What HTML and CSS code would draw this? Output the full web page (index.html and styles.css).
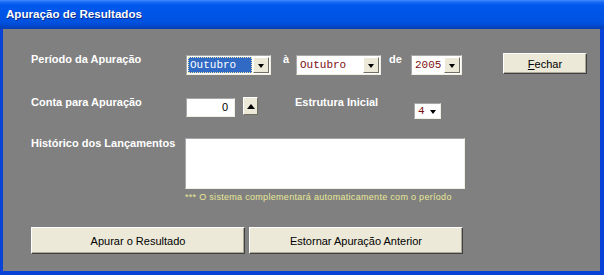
FILE: index.html
```html
<!DOCTYPE html>
<html lang="pt">
<head>
  <meta charset="UTF-8" />
  <title>Apuração de Resultados</title>
  <link rel="stylesheet" href="styles.css">
</head>
<body>
  <div class="window">
    <div class="titlebar">Apuração de Resultados</div>

    <div class="client">
      <div class="row row-periodo">
        <span class="label">Período da Apuração</span>
        <div class="combo combo-mes focused">
          <span class="value">Outubro</span>
          <span class="drop"><i class="arrow-down"></i></span>
        </div>
        <span class="joiner joiner-a">à</span>
        <div class="combo combo-mes">
          <span class="value">Outubro</span>
          <span class="drop"><i class="arrow-down"></i></span>
        </div>
        <span class="joiner joiner-de">de</span>
        <div class="combo combo-ano">
          <span class="value">2005</span>
          <span class="drop"><i class="arrow-down"></i></span>
        </div>
        <button class="btn btn-fechar"><u>F</u>echar</button>
      </div>

      <div class="row row-conta">
        <span class="label">Conta para Apuração</span>
        <div class="field field-conta">0</div>
        <span class="spin"><i class="arrow-up"></i></span>
        <span class="label label-estrutura">Estrutura Inicial</span>
        <div class="combo combo-estrutura">
          <span class="value">4</span>
          <span class="drop"><i class="arrow-down"></i></span>
        </div>
      </div>

      <div class="row row-historico">
        <span class="label">Histórico dos Lançamentos</span>
        <div class="historico">
          <div class="memo"></div>
          <p class="note">*** O sistema complementará automaticamente com o período</p>
        </div>
      </div>

      <div class="row row-acoes">
        <button class="btn btn-wide">Apurar o Resultado</button>
        <button class="btn btn-wide">Estornar Apuração Anterior</button>
      </div>
    </div>
  </div>
</body>
</html>
```

FILE: styles.css
```css
body {
  margin: 0;
  padding: 0;
  background: #808080;
  font-family: "Liberation Sans", Arial, sans-serif;
}

.window {
  width: 604px;
  height: 275px;
  box-sizing: border-box;
  display: flex;
  flex-direction: column;
  background: #0842d6;
  padding: 0 4px 4px 3px;
}

.titlebar {
  height: 29px;
  margin: 0 -4px 0 -3px;
  padding-left: 6px;
  box-sizing: border-box;
  background: linear-gradient(to bottom, #3d8cff 0, #1c6bf5 2px, #0058ee 5px, #0055e6 14px, #0052e0 22px, #0047cc 26px, #0a3fb0 29px);
  color: #fff;
  font-weight: bold;
  font-size: 11.6px;
  line-height: 28px;
  text-shadow: 1px 1px 0 #0b2a8a;
}

.client {
  flex: 1;
  background: #808080;
  padding: 23px 13px 0 28px;
}

.row {
  display: flex;
  align-items: flex-start;
}

.label {
  width: 155px;
  flex: none;
  color: #fff;
  font-weight: bold;
  font-size: 11px;
  line-height: 14px;
}

.joiner {
  color: #fff;
  font-weight: bold;
  font-size: 11px;
  line-height: 14px;
  box-sizing: border-box;
  flex: none;
}

.joiner-a {
  width: 25px;
  padding-left: 12px;
}

.joiner-de {
  width: 30px;
  padding-left: 8px;
}

/* combo boxes */
.combo {
  display: flex;
  height: 20px;
  margin-top: 3px;
  box-sizing: border-box;
  background: #fff;
  border: 1px solid;
  border-color: #a7a6aa #f1efe2 #f1efe2 #a7a6aa;
  padding: 1px;
}

.combo .value {
  flex: 1;
  font-family: "Liberation Mono", "Courier New", monospace;
  font-size: 11px;
  line-height: 16px;
  color: #7a1010;
  padding-left: 2px;
}

.combo-mes {
  width: 85px;
}

.combo-ano {
  width: 51px;
}

.combo.focused .value {
  background: #316ac5;
  color: #fff;
  outline: 1px dotted #e8e0a0;
  outline-offset: -1px;
  margin-right: 1px;
}

.drop {
  width: 16px;
  flex: none;
  background: #ece9d8;
  border: 1px solid;
  border-color: #fff #716f64 #716f64 #fff;
  box-sizing: border-box;
  display: flex;
  align-items: center;
  justify-content: center;
}

.arrow-down {
  width: 0;
  height: 0;
  border-left: 3.5px solid transparent;
  border-right: 3.5px solid transparent;
  border-top: 4px solid #000;
  margin-top: 1px;
}

.arrow-up {
  width: 0;
  height: 0;
  border-left: 4px solid transparent;
  border-right: 4px solid transparent;
  border-bottom: 5px solid #000;
}

/* buttons */
.btn {
  background: #ece9d8;
  border: 1px solid;
  border-color: #fff #404040 #404040 #fff;
  box-shadow: inset -1px -1px 0 #aca899;
  font-family: "Liberation Sans", Arial, sans-serif;
  font-size: 11px;
  color: #000;
  padding: 0;
  flex: none;
}

.btn-fechar {
  width: 84px;
  height: 21px;
  margin-top: 1px;
  margin-left: 41px;
}

.btn-wide {
  width: 214px;
  height: 27px;
}

.row-conta {
  margin-top: 20px;
}

.field-conta {
  width: 49px;
  height: 19px;
  margin-top: 3px;
  box-sizing: border-box;
  background: #fff;
  border: 1px solid;
  border-color: #a7a6aa #f1efe2 #f1efe2 #a7a6aa;
  text-align: right;
  padding-right: 6px;
  font-size: 11px;
  line-height: 17px;
  color: #000;
}

.spin {
  width: 15px;
  height: 18px;
  margin-top: 2px;
  margin-left: 8px;
  box-sizing: border-box;
  background: #ece9d8;
  border: 1px solid;
  border-color: #fff #716f64 #716f64 #fff;
  display: flex;
  align-items: center;
  justify-content: center;
}

.label-estrutura {
  width: 119px;
  margin-left: 37px;
}

.combo-estrutura {
  width: 27px;
  height: 16px;
  margin-top: 8px;
  padding: 0 1px;
}

.combo-estrutura .value {
  line-height: 14px;
  padding-left: 2px;
}

.combo-estrutura .drop {
  width: 13px;
  border: none;
  background: #fff;
}

.row-historico {
  margin-top: 17px;
}

.historico {
  margin-top: 2px;
  margin-left: -1px;
}

.memo {
  width: 280px;
  height: 51px;
  box-sizing: border-box;
  background: #fff;
  border: 1px solid;
  border-color: #a7a6aa #f1efe2 #f1efe2 #a7a6aa;
}

.note {
  margin: 2px 0 0;
  font-size: 9px;
  line-height: 12px;
  letter-spacing: 0.3px;
  color: #e8e898;
}

.row-acoes {
  margin-top: 24px;
  gap: 4px;
}
```
